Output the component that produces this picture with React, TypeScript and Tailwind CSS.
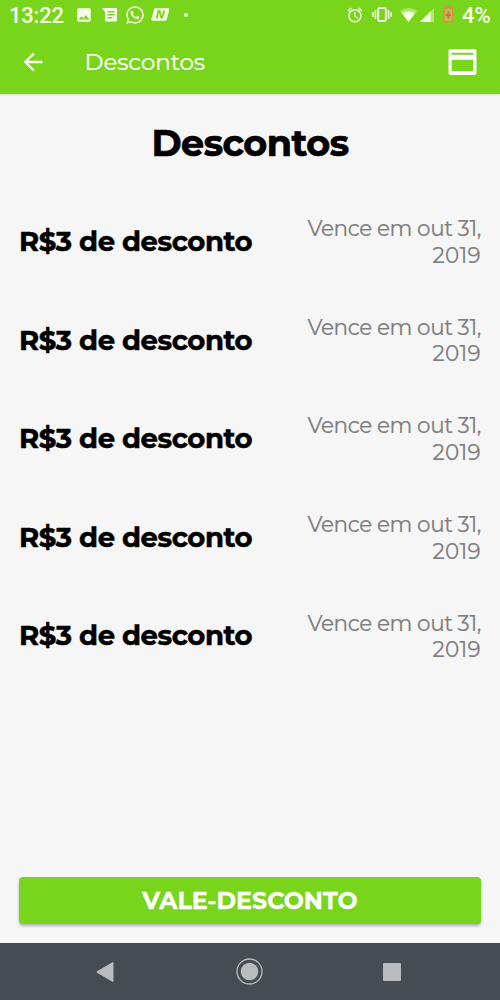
import type { ReactNode } from "react";
import { FaWhatsapp } from "react-icons/fa";
import { MdAlarm, MdArrowBack, MdImage } from "react-icons/md";

const discounts = [1, 2, 3, 4, 5].map((id) => ({
  id,
  title: "R$3 de desconto",
  day: "Vence em out 31,",
  year: "2019",
}));

function StatusBar() {
  return (
    <div className="flex h-[29px] items-center font-['Roboto',sans-serif] text-[22px] font-medium leading-none text-[#f8ffe9]">
      <span className="ml-[9px] mt-[3px] w-[65px] tracking-[-0.2px]">13:22</span>
      <MdImage className="ml-px size-[18px] shrink-0" />
      <svg className="ml-[9px] h-[14px] w-[16px] shrink-0" viewBox="0 0 16 14" fill="currentColor">
        <path fillRule="evenodd" d="M0 0H14Q15 0 15 1V12.5Q15 13.5 14 13.5H4Q3 13.5 3 12.5V4ZM5.5 3V4.5H12.7V3ZM5.5 6V7.5H12.7V6ZM5.5 9V10.5H10.5V9Z" />
      </svg>
      <FaWhatsapp className="ml-[7px] size-[20px] shrink-0" />
      <svg className="ml-[6px] h-[13px] w-[20px] shrink-0" viewBox="0 0 20 13">
        <path d="M4.5 .3H17.2Q18.7 .3 18.3 1.7L15.8 11.3Q15.4 12.7 14 12.7H1.3Q0 12.7 .4 11.3L3 1.5Q3.3 .3 4.5 .3Z" fill="currentColor" />
        <path d="M5.6 10.5 7.6 3H8.7L10.2 9.6H11.3L13.2 2.5" fill="none" stroke="#79d51b" strokeWidth="1.8" />
      </svg>
      <span className="ml-[13px] size-[4px] rounded-full bg-[#f8ffe9]" />
      <MdAlarm className="ml-[158px] size-[18px] shrink-0" />
      <svg className="ml-[8px] h-[15px] w-[20px] shrink-0" viewBox="0 0 20 15" fill="none" stroke="currentColor">
        <rect x="6.2" y="1.2" width="7.6" height="12.6" rx=".7" strokeWidth="1.8" />
        <path d="M3.5 3V12M16.5 3V12" strokeWidth="1.6" />
        <path d="M1 5V10M19 5V10" strokeWidth="1.4" />
      </svg>
      <svg className="ml-[8px] h-[14px] w-[17px] shrink-0" viewBox="0 0 17 14">
        <path d="M0 3Q8.5-3 17 3L8.5 14Z" fill="currentColor" opacity=".4" />
        <path d="M2 5Q8.5 1.8 15 5L8.5 14Z" fill="currentColor" />
      </svg>
      <svg className="ml-[3px] h-[14px] w-[14px] shrink-0" viewBox="0 0 14 14" fill="currentColor">
        <path d="M14 0V14H0Z" opacity=".45" />
        <path d="M10.5 3.5V14H0Z" />
      </svg>
      <svg className="ml-[9px] h-[17px] w-[11px] shrink-0" viewBox="0 0 11 17">
        <path d="M3.5 2.5V1H7.5V2.5H9.7V15.8H1.3V2.5Z" fill="#a3c850" stroke="#e58a43" strokeWidth="1.3" />
        <path d="M5.5 5.5V12.5M2.8 9H8.2" fill="none" stroke="#ef633c" strokeWidth="1.8" />
      </svg>
      <span className="ml-[8px] mt-[3px] tracking-[-0.1px]">4%</span>
    </div>
  );
}

function AppBar() {
  return (
    <div className="flex h-[65px] items-center text-white">
      <MdArrowBack className="ml-[19px] size-[28px]" />
      <span className="ml-[37.5px] mt-[2px] text-[23px] leading-none tracking-[-0.1px] [-webkit-text-stroke:0.2px]">Descontos</span>
      <svg className="ml-auto mr-[23px] h-[26px] w-[29px]" viewBox="0 0 29 26" fill="currentColor">
        <path fillRule="evenodd" d="M3 0H26Q28.5 0 28.5 2.5V23.5Q28.5 26 26 26H3Q.5 26 .5 23.5V2.5Q.5 0 3 0ZM3.7 3.7V5.7H25.3V3.7ZM3.7 10.8V22.3H25.3V10.8Z" />
      </svg>
    </div>
  );
}

function DiscountRow({ title, children }: { title: string; children: ReactNode }) {
  return (
    <li className="flex h-[98.6px] items-center justify-between px-[19px]">
      <strong className="-mt-px whitespace-nowrap text-[27.5px] font-bold leading-none tracking-[-0.42px] text-black [-webkit-text-stroke:0.5px]">{title}</strong>
      <div className="-mt-px whitespace-nowrap text-right text-[21.5px] leading-[26.5px] text-[#7d7d7d] [-webkit-text-stroke:0.2px]">{children}</div>
    </li>
  );
}

export default function App() {
  return (
    <div className="flex h-[1000px] w-[500px] flex-col overflow-hidden bg-[#f6f6f6] font-['Montserrat','Inter',sans-serif]">
      <header className="h-[94px] shrink-0 bg-[#79d51b] shadow-[0_1px_2px_rgba(0,0,0,0.12)]">
        <StatusBar />
        <AppBar />
      </header>
      <main className="flex min-h-0 flex-1 flex-col">
        <h1 className="flex h-[99px] shrink-0 items-center justify-center text-[36.5px] font-bold leading-none tracking-[-0.5px] text-black [-webkit-text-stroke:0.7px]">Descontos</h1>
        <ul className="flex-1">
          {discounts.map((item) => (
            <DiscountRow key={item.id} title={item.title}>
              <div className="tracking-[-0.35px] [word-spacing:-0.3px]">{item.day}</div>
              <div className="tracking-[0.3px]">{item.year}</div>
            </DiscountRow>
          ))}
        </ul>
        <button className="mx-[19px] mb-[19px] h-[47px] shrink-0 rounded-[4px] bg-[#79d51b] pt-px text-[23.8px] font-bold leading-none text-white shadow-[0_2px_3px_rgba(0,0,0,0.28)] [-webkit-text-stroke:0.3px]">VALE-DESCONTO</button>
      </main>
      <nav className="flex h-[57px] shrink-0 items-center bg-[#454d52] text-[#b8bcbd]">
        <svg className="ml-[96px] h-[20px] w-[18px]" viewBox="0 0 18 20" fill="currentColor">
          <path d="M16 .4Q17.5-.3 17.5 1.3V18.7Q17.5 20.3 16 19.4L1 10.7Q0 10 1 9.3Z" />
        </svg>
        <svg className="ml-[122px] size-[27px]" viewBox="0 0 27 27">
          <circle cx="13.5" cy="13.5" r="12.5" fill="none" stroke="currentColor" strokeWidth="1.3" />
          <circle cx="13.5" cy="13.5" r="8.8" fill="currentColor" />
        </svg>
        <span className="ml-[120px] size-[18px] rounded-[1px] bg-[#b8bcbd]" />
      </nav>
    </div>
  );
}
